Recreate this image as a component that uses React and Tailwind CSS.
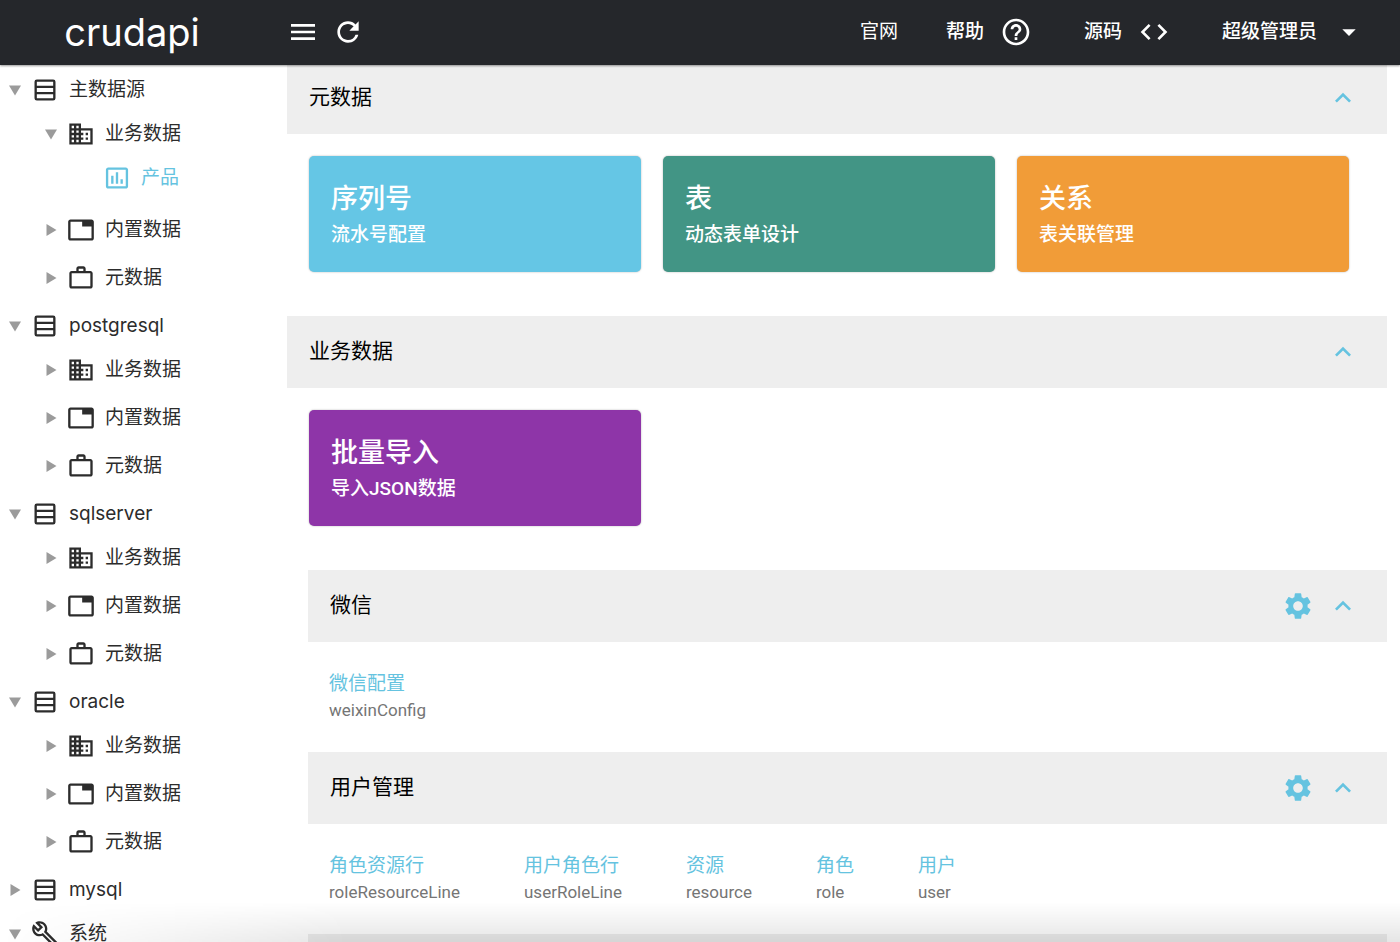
import React, { useState } from 'react';
import {
  MdMenu,
  MdRefresh,
  MdHelpOutline,
  MdCode,
  MdArrowDropDown,
  MdKeyboardArrowUp,
  MdKeyboardArrowDown,
  MdSettings,
  MdDomain,
  MdTab,
  MdWorkOutline,
  MdInsertChartOutlined,
  MdOutlineBuild,
} from 'react-icons/md';

function SourceIcon({ className }) {
  return (
    <svg className={className} viewBox="0 0 24 24" fill="none" stroke="currentColor" strokeWidth="2">
      <rect x="4" y="4" width="16" height="16" rx="1" />
      <path d="M4 9.3h16M4 14.7h16" />
    </svg>
  );
}

function Triangle({ open }) {
  return (
    <svg
      className={`w-3 h-3 text-[#9b9b9b] ${open ? 'rotate-90' : ''}`}
      viewBox="0 0 12 12"
      fill="currentColor"
    >
      <path d="M1.5 0l10 6-10 6z" />
    </svg>
  );
}

const branch = (id, children) => [
  { id: `${id}-business`, label: '业务数据', icon: MdDomain, open: !!children, children },
  { id: `${id}-builtin`, label: '内置数据', icon: MdTab },
  { id: `${id}-meta`, label: '元数据', icon: MdWorkOutline },
];

const tree = [
  {
    id: 'main',
    label: '主数据源',
    icon: SourceIcon,
    open: true,
    children: branch('main', [
      { id: 'product', label: '产品', icon: MdInsertChartOutlined, leaf: true, active: true },
    ]),
  },
  { id: 'postgresql', label: 'postgresql', icon: SourceIcon, open: true, children: branch('postgresql') },
  { id: 'sqlserver', label: 'sqlserver', icon: SourceIcon, open: true, children: branch('sqlserver') },
  { id: 'oracle', label: 'oracle', icon: SourceIcon, open: true, children: branch('oracle') },
  { id: 'mysql', label: 'mysql', icon: SourceIcon },
  { id: 'system', label: '系统', icon: MdOutlineBuild, open: true },
];

const cards = {
  meta: [
    { title: '序列号', text: '流水号配置', color: 'bg-[#65c6e5]' },
    { title: '表', text: '动态表单设计', color: 'bg-[#429585]' },
    { title: '关系', text: '表关联管理', color: 'bg-[#f19c38]' },
  ],
  business: [{ title: '批量导入', text: '导入JSON数据', color: 'bg-[#8e35a8]' }],
};

const modules = [
  { title: '微信', tables: [{ name: 'weixinConfig', label: '微信配置' }] },
  {
    title: '用户管理',
    tables: [
      { name: 'roleResourceLine', label: '角色资源行' },
      { name: 'userRoleLine', label: '用户角色行' },
      { name: 'resource', label: '资源' },
      { name: 'role', label: '角色' },
      { name: 'user', label: '用户' },
    ],
  },
];

function TreeNode({ node, nested }) {
  const [open, setOpen] = useState(!!node.open);
  const Icon = node.icon;

  return (
    <li className={nested ? 'pb-1' : ''}>
      <button
        type="button"
        onClick={() => setOpen(!open)}
        className={`w-full h-11 flex items-center whitespace-nowrap ${
          node.active ? 'text-[#65c3e0]' : 'text-[#2c2c2c]'
        }`}
      >
        <span className="w-[22px] shrink-0 flex">{!node.leaf && <Triangle open={open} />}</span>
        <Icon className="w-7 h-7 shrink-0 mr-[10px]" />
        {node.label}
      </button>
      {open && node.children && (
        <ul className="pl-9">
          {node.children.map((child) => (
            <TreeNode key={child.id} node={child} nested />
          ))}
        </ul>
      )}
    </li>
  );
}

function Section({ title, settings, children }) {
  const [open, setOpen] = useState(true);

  return (
    <section>
      <div className="h-[72px] pl-[22px] pr-7 bg-[#eeeeee] flex items-center gap-[13px]">
        <h2 className="flex-1 text-[21px] text-black">{title}</h2>
        {settings && (
          <button type="button" aria-label="设置" className="text-[#65c3e0]">
            <MdSettings className="w-8 h-8" />
          </button>
        )}
        <button type="button" aria-label="展开" onClick={() => setOpen(!open)} className="text-[#65c3e0]">
          {open ? <MdKeyboardArrowUp className="w-8 h-8" /> : <MdKeyboardArrowDown className="w-8 h-8" />}
        </button>
      </div>
      {open && children}
    </section>
  );
}

function CardGrid({ items }) {
  return (
    <div className="grid grid-cols-3 gap-[22px] pl-[22px] pr-[38px] pt-[22px] pb-11">
      {items.map((item) => (
        <a
          key={item.title}
          href="#"
          className={`block p-[22px] rounded-[5px] shadow-[0_0_2px_rgba(0,0,0,0.3)] text-white font-medium ${item.color}`}
        >
          <div className="text-[27px] leading-[42px]">{item.title}</div>
          <div className="text-[19px] leading-[30px]">{item.text}</div>
        </a>
      ))}
    </div>
  );
}

export default function App() {
  return (
    <div className="h-screen flex flex-col overflow-hidden bg-white text-[19px] font-[Roboto,'Noto_Sans_CJK_SC',sans-serif]">
      <header className="relative z-10 h-[65px] shrink-0 bg-[#25272b] text-white flex items-center pb-px shadow-[0_1px_2px_rgba(0,0,0,0.4)]">
        <div className="w-[264px] text-center text-[38px] leading-[60px] font-[Inter,sans-serif]">crudapi</div>
        <div className="flex flex-1 items-center gap-[13px] pl-[23px]">
          <button type="button" aria-label="菜单">
            <MdMenu className="w-8 h-8" />
          </button>
          <button type="button" aria-label="刷新">
            <MdRefresh className="w-8 h-8" />
          </button>
        </div>
        <nav className="flex items-center gap-12 pr-[35px] font-medium">
          <a href="#" className="font-normal">官网</a>
          <a href="#" className="flex items-center gap-4 pr-1">
            帮助
            <MdHelpOutline className="w-8 h-8" />
          </a>
          <a href="#" className="flex items-center gap-4 pr-1">
            源码
            <MdCode className="w-8 h-8" />
          </a>
          <button type="button" className="flex items-center gap-4">
            超级管理员
            <MdArrowDropDown className="w-8 h-8" />
          </button>
        </nav>
      </header>

      <div className="flex flex-1 min-h-0">
        <aside className="w-[287px] shrink-0 overflow-hidden pl-[9px] pt-[3px] font-[Inter,'Noto_Sans_CJK_SC',sans-serif]">
          <ul>
            {tree.map((node) => (
              <TreeNode key={node.id} node={node} />
            ))}
          </ul>
        </aside>

        <main className="flex-1 min-w-0 overflow-hidden pr-[13px]">
          <div className="-mt-[3px]">
            <Section title="元数据">
              <CardGrid items={cards.meta} />
            </Section>
            <Section title="业务数据">
              <CardGrid items={cards.business} />
            </Section>
            <div className="pl-[21px]">
              {modules.map((module) => (
                <Section key={module.title} title={module.title} settings>
                  <div className="flex gap-16 pl-[21px] pt-7 pb-[30px]">
                    {module.tables.map((table) => (
                      <div key={table.name}>
                        <a href="#" className="block leading-7 text-[#65c3e0]">{table.label}</a>
                        <div className="text-[17px] leading-6 text-[#757575]">{table.name}</div>
                      </div>
                    ))}
                  </div>
                </Section>
              ))}
              <Section settings />
            </div>
          </div>
        </main>
      </div>

      {/* Bottom fade */}
      <div className="pointer-events-none fixed inset-x-0 bottom-0 z-20 h-10 bg-linear-to-t from-black/10 to-transparent [mask-image:linear-gradient(to_right,transparent,black_25%)]" />
    </div>
  );
}
